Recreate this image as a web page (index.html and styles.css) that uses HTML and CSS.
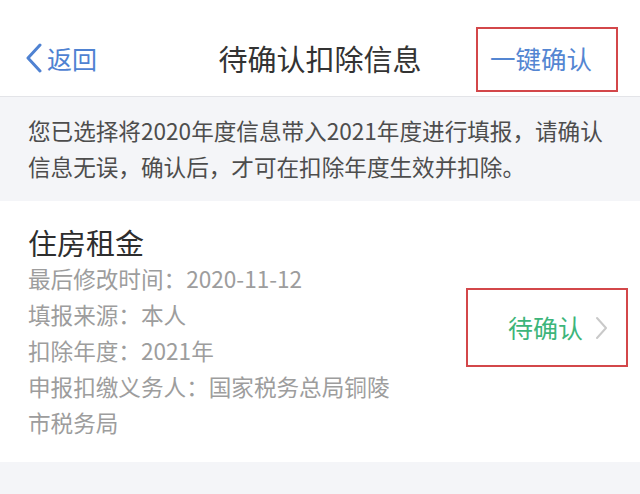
FILE: index.html
```html
<!DOCTYPE html>
<html lang="zh">
<head>
<meta charset="utf-8">
<link rel="stylesheet" href="styles.css">
</head>
<body>
<div class="page">
  <header class="nav">
    <div class="back">
      <svg class="back-icon" width="20" height="30" viewBox="0 0 20 30"><polyline points="16,2 4,15 16,28" fill="none" stroke="#4f82d2" stroke-width="3" stroke-linecap="round" stroke-linejoin="round"/></svg>
      <span>返回</span>
    </div>
    <div class="title">待确认扣除信息</div>
    <div class="right"><div class="confirm-all">一键确认</div></div>
  </header>
  <div class="notice">您已选择将2020年度信息带入2021年度进行填报，请确认信息无误，确认后，才可在扣除年度生效并扣除。</div>
  <section class="card">
    <div class="info">
      <div class="item-title">住房租金</div>
      <div class="details">
        <div>最后修改时间：2020-11-12</div>
        <div>填报来源：本人</div>
        <div>扣除年度：2021年</div>
        <div>申报扣缴义务人：国家税务总局铜陵市税务局</div>
      </div>
    </div>
    <div class="status">
      <span>待确认</span>
      <svg width="14" height="26" viewBox="0 0 14 26"><polyline points="3,3 12,13 3,23" fill="none" stroke="#c9c9c9" stroke-width="2" stroke-linecap="round" stroke-linejoin="round"/></svg>
    </div>
  </section>
</div>
</body>
</html>
```

FILE: styles.css
```css
* { box-sizing: border-box; }
html, body { margin: 0; padding: 0; }
body {
  width: 640px;
  height: 494px;
  overflow: hidden;
  background: #f4f5f8;
  font-family: "Noto Sans CJK SC", "Noto Sans", sans-serif;
}
.page { width: 640px; }
.nav {
  height: 97px;
  background: #fff;
  border-bottom: 1px solid #e3e4e8;
  display: grid;
  grid-template-columns: 1fr auto 1fr;
  align-items: center;
  padding-top: 24px;
}
.back {
  display: flex;
  align-items: center;
  padding-left: 24px;
  color: #4f82d2;
  font-size: 25px;
  gap: 3px;
  margin-top: -4px;
}
.back-icon { display: block; }
.title {
  font-size: 29px;
  color: #333;
  margin-top: -4px;
}
.right {
  display: flex;
  justify-content: flex-end;
  padding-right: 22px;
}
.confirm-all {
  width: 142px;
  height: 65px;
  border: 2px solid #d3474a;
  color: #5486d2;
  font-size: 25.5px;
  display: flex;
  align-items: center;
  padding-left: 12px;
  padding-bottom: 4px;
  margin-top: -1px;
}
.notice {
  padding: 16px 28px;
  font-size: 22.6px;
  line-height: 36px;
  color: #4d4d4d;
  height: 104px;
}
.card {
  background: #fff;
  height: 261px;
  display: flex;
  align-items: center;
  justify-content: space-between;
  padding: 22px 12px 21px 28px;
}
.item-title {
  font-size: 29px;
  line-height: 38px;
  color: #2e2e2e;
}
.details {
  width: 370px;
  font-size: 22.6px;
  line-height: 36px;
  color: #9d9d9d;
}
.status {
  width: 162px;
  height: 79px;
  border: 2px solid #d3474a;
  display: flex;
  align-items: center;
  padding-left: 40px;
  gap: 11px;
  color: #3db57a;
  font-size: 25px;
  margin-top: -10px;
}
.status svg { display: block; margin-top: 2px; }
```
